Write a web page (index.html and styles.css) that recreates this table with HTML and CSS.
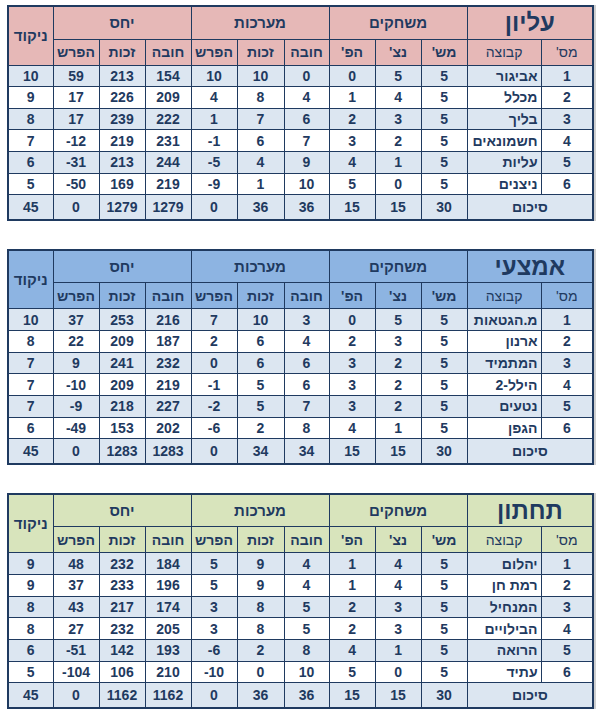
FILE: index.html
```html
<!DOCTYPE html>
<html lang="he">
<head>
<meta charset="utf-8">
<link rel="stylesheet" href="styles.css">
</head>
<body>
<div class="page">

<section class="block">
<table class="league pink">
<colgroup><col class="c45"><col class="c46"><col class="c46"><col class="c46"><col class="c46"><col class="c47"><col class="c45"><col class="c46"><col class="c46"><col class="c46"><col class="c74"><col class="c52"></colgroup>
<tr class="h1"><th rowspan="2">ניקוד</th><th colspan="3">יחס</th><th colspan="3">מערכות</th><th colspan="3">משחקים</th><th colspan="2" class="title">עליון</th></tr>
<tr class="h2"><th>הפרש</th><th>זכות</th><th>חובה</th><th>הפרש</th><th>זכות</th><th>חובה</th><th>הפ'</th><th>נצ'</th><th>מש'</th><th class="thin">קבוצה</th><th class="thin">מס'</th></tr>
<tr class="row alt"><td>10</td><td>59</td><td>213</td><td>154</td><td>10</td><td>10</td><td>0</td><td>0</td><td>5</td><td>5</td><td class="name">אביגור</td><td>1</td></tr>
<tr class="row"><td>9</td><td>17</td><td>226</td><td>209</td><td>4</td><td>8</td><td>4</td><td>1</td><td>4</td><td>5</td><td class="name">מכלל</td><td>2</td></tr>
<tr class="row alt"><td>8</td><td>17</td><td>239</td><td>222</td><td>1</td><td>7</td><td>6</td><td>2</td><td>3</td><td>5</td><td class="name">בליך</td><td>3</td></tr>
<tr class="row"><td>7</td><td>-12</td><td>219</td><td>231</td><td>-1</td><td>6</td><td>7</td><td>3</td><td>2</td><td>5</td><td class="name">חשמונאים</td><td>4</td></tr>
<tr class="row alt"><td>6</td><td>-31</td><td>213</td><td>244</td><td>-5</td><td>4</td><td>9</td><td>4</td><td>1</td><td>5</td><td class="name">עליות</td><td>5</td></tr>
<tr class="row"><td>5</td><td>-50</td><td>169</td><td>219</td><td>-9</td><td>1</td><td>10</td><td>5</td><td>0</td><td>5</td><td class="name">ניצנים</td><td>6</td></tr>
<tr class="total"><td>45</td><td>0</td><td>1279</td><td>1279</td><td>0</td><td>36</td><td>36</td><td>15</td><td>15</td><td>30</td><td colspan="2" class="sum">סיכום</td></tr>
</table>
</section>

<section class="block">
<table class="league blue">
<colgroup><col class="c45"><col class="c46"><col class="c46"><col class="c46"><col class="c46"><col class="c47"><col class="c45"><col class="c46"><col class="c46"><col class="c46"><col class="c74"><col class="c52"></colgroup>
<tr class="h1"><th rowspan="2">ניקוד</th><th colspan="3">יחס</th><th colspan="3">מערכות</th><th colspan="3">משחקים</th><th colspan="2" class="title">אמצעי</th></tr>
<tr class="h2"><th>הפרש</th><th>זכות</th><th>חובה</th><th>הפרש</th><th>זכות</th><th>חובה</th><th>הפ'</th><th>נצ'</th><th>מש'</th><th class="thin">קבוצה</th><th class="thin">מס'</th></tr>
<tr class="row alt"><td>10</td><td>37</td><td>253</td><td>216</td><td>7</td><td>10</td><td>3</td><td>0</td><td>5</td><td>5</td><td class="name">מ.הגטאות</td><td>1</td></tr>
<tr class="row"><td>8</td><td>22</td><td>209</td><td>187</td><td>2</td><td>6</td><td>4</td><td>2</td><td>3</td><td>5</td><td class="name">ארנון</td><td>2</td></tr>
<tr class="row alt"><td>7</td><td>9</td><td>241</td><td>232</td><td>0</td><td>6</td><td>6</td><td>3</td><td>2</td><td>5</td><td class="name">המתמיד</td><td>3</td></tr>
<tr class="row"><td>7</td><td>-10</td><td>209</td><td>219</td><td>-1</td><td>5</td><td>6</td><td>3</td><td>2</td><td>5</td><td class="name">הילל-2</td><td>4</td></tr>
<tr class="row alt"><td>7</td><td>-9</td><td>218</td><td>227</td><td>-2</td><td>5</td><td>7</td><td>3</td><td>2</td><td>5</td><td class="name">נטעים</td><td>5</td></tr>
<tr class="row"><td>6</td><td>-49</td><td>153</td><td>202</td><td>-6</td><td>2</td><td>8</td><td>4</td><td>1</td><td>5</td><td class="name">הגפן</td><td>6</td></tr>
<tr class="total"><td>45</td><td>0</td><td>1283</td><td>1283</td><td>0</td><td>34</td><td>34</td><td>15</td><td>15</td><td>30</td><td colspan="2" class="sum">סיכום</td></tr>
</table>
</section>

<section class="block">
<table class="league green">
<colgroup><col class="c45"><col class="c46"><col class="c46"><col class="c46"><col class="c46"><col class="c47"><col class="c45"><col class="c46"><col class="c46"><col class="c46"><col class="c74"><col class="c52"></colgroup>
<tr class="h1"><th rowspan="2">ניקוד</th><th colspan="3">יחס</th><th colspan="3">מערכות</th><th colspan="3">משחקים</th><th colspan="2" class="title">תחתון</th></tr>
<tr class="h2"><th>הפרש</th><th>זכות</th><th>חובה</th><th>הפרש</th><th>זכות</th><th>חובה</th><th>הפ'</th><th>נצ'</th><th>מש'</th><th class="thin">קבוצה</th><th class="thin">מס'</th></tr>
<tr class="row alt"><td>9</td><td>48</td><td>232</td><td>184</td><td>5</td><td>9</td><td>4</td><td>1</td><td>4</td><td>5</td><td class="name">יהלום</td><td>1</td></tr>
<tr class="row"><td>9</td><td>37</td><td>233</td><td>196</td><td>5</td><td>9</td><td>4</td><td>1</td><td>4</td><td>5</td><td class="name">רמת חן</td><td>2</td></tr>
<tr class="row alt"><td>8</td><td>43</td><td>217</td><td>174</td><td>3</td><td>8</td><td>5</td><td>2</td><td>3</td><td>5</td><td class="name">המנחיל</td><td>3</td></tr>
<tr class="row"><td>8</td><td>27</td><td>232</td><td>205</td><td>3</td><td>8</td><td>5</td><td>2</td><td>3</td><td>5</td><td class="name">הבילויים</td><td>4</td></tr>
<tr class="row alt"><td>6</td><td>-51</td><td>142</td><td>193</td><td>-6</td><td>2</td><td>8</td><td>4</td><td>1</td><td>5</td><td class="name">הרואה</td><td>5</td></tr>
<tr class="row"><td>5</td><td>-104</td><td>106</td><td>210</td><td>-10</td><td>0</td><td>10</td><td>5</td><td>0</td><td>5</td><td class="name">עתיד</td><td>6</td></tr>
<tr class="total"><td>45</td><td>0</td><td>1162</td><td>1162</td><td>0</td><td>36</td><td>36</td><td>15</td><td>15</td><td>30</td><td colspan="2" class="sum">סיכום</td></tr>
</table>
</section>

</div>
</body>
</html>
```
FILE: styles.css
```css
html, body {
  margin: 0;
  padding: 0;
  background: #ffffff;
}

.page {
  padding: 5px 0 0 7px;
  display: flex;
  flex-direction: column;
  gap: 28px;
  font-family: "Liberation Sans", Arial, sans-serif;
  color: #1f3a60;
}

.block {
  width: 587px;
}

.league {
  border-collapse: collapse;
  table-layout: fixed;
  width: 585px;
  border: 2px solid #1f3a60;
  box-shadow: 2px 0 0 #cfcfcf;
}

.c45 { width: 45px; }
.c46 { width: 46px; }
.c47 { width: 47px; }
.c52 { width: 52px; }
.c74 { width: 74px; }

.league th,
.league td {
  border: 1px solid #1f3a60;
  padding: 0;
  text-align: center;
  vertical-align: middle;
  font-weight: bold;
  white-space: nowrap;
  overflow: hidden;
}

.league th {
  direction: rtl;
  font-size: 14px;
}

.h1 { height: 33px; }
.h2 { height: 26px; }
.row { height: 21.67px; }
.total { height: 25px; }

.h1 th { font-size: 15px; }
.h2 th { font-size: 14px; }
.h2 th.thin { font-weight: normal; }

.league th.title {
  font-size: 24px;
}

.league td {
  font-size: 14px;
}

.league td.name {
  direction: rtl;
  text-align: right;
  padding-right: 3px;
}

.league td.sum {
  direction: rtl;
  font-size: 14px;
}

.pink .h1, .pink .h2 { background: #e6b8b7; }
.blue .h1, .blue .h2 { background: #8db4e2; }
.green .h1, .green .h2 { background: #d8e4bc; }

.row { background: #ffffff; }
.row.alt,
.total { background: #dce6f1; }
```
